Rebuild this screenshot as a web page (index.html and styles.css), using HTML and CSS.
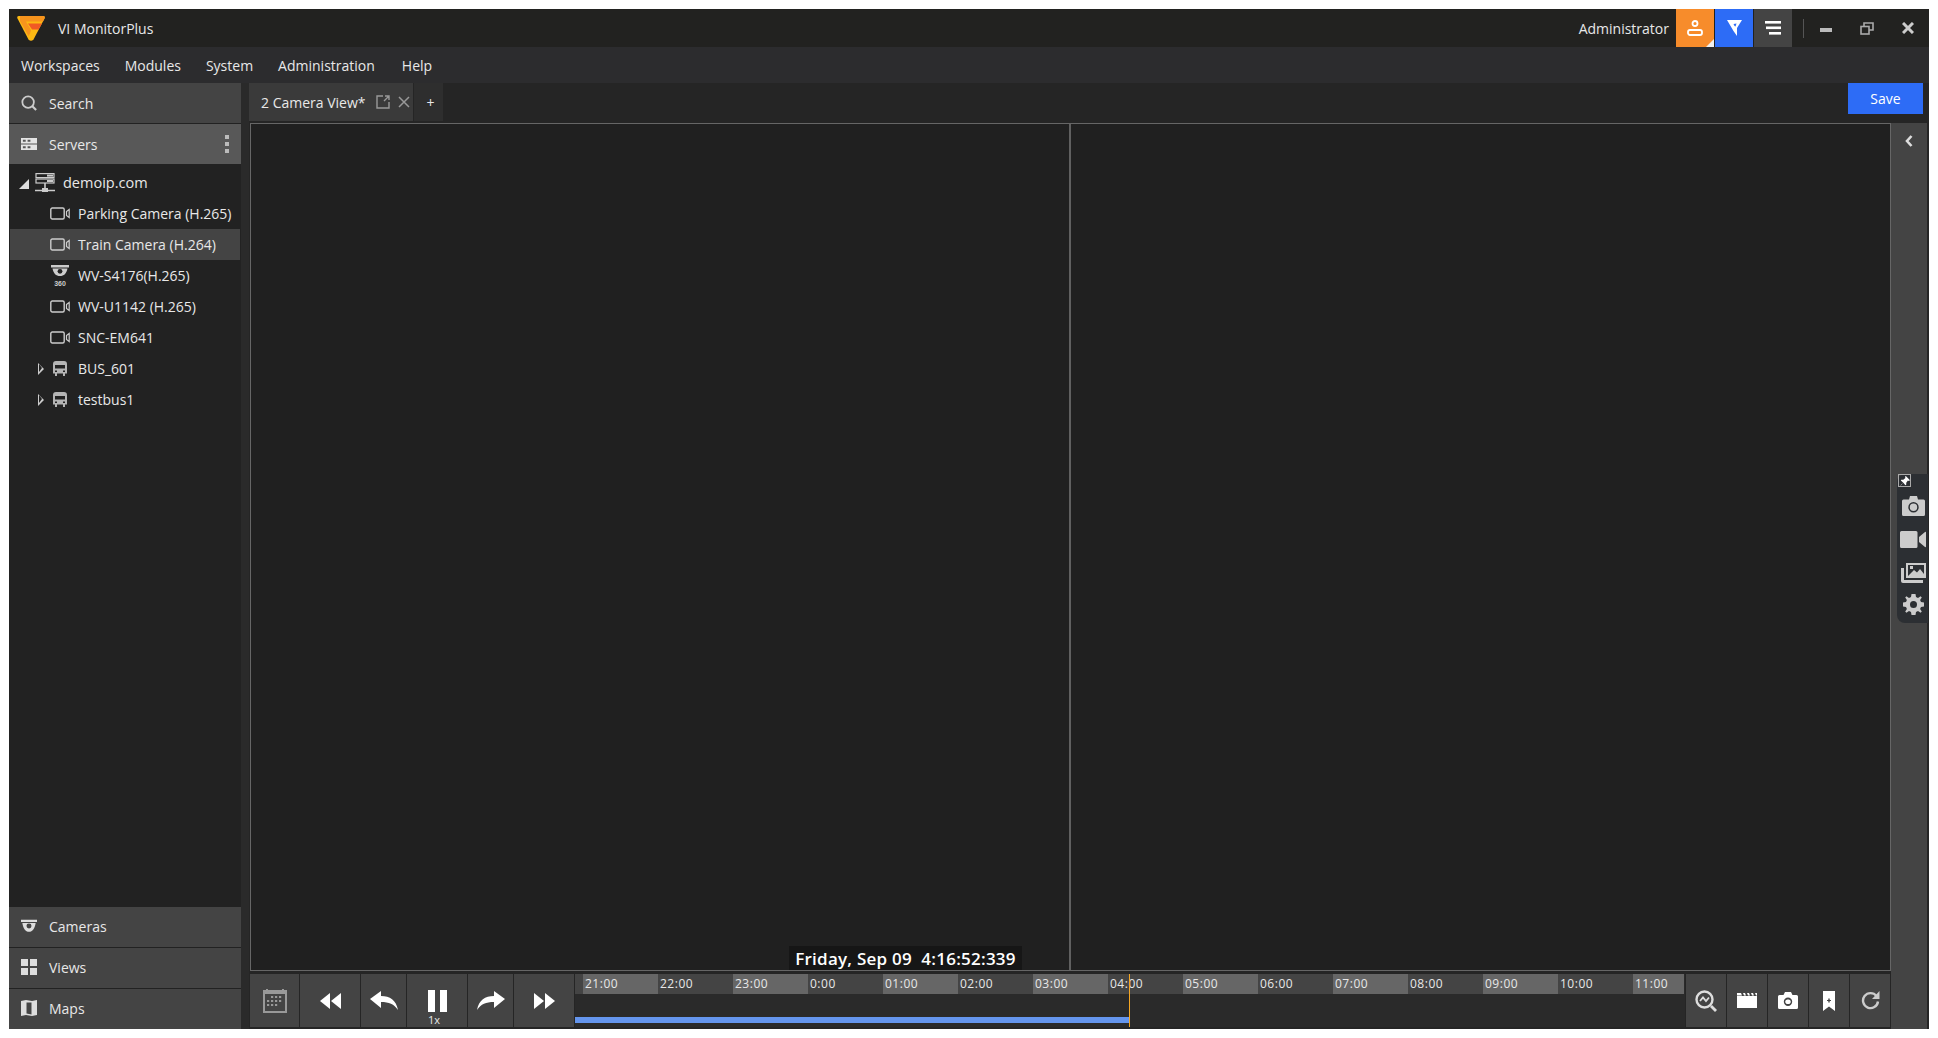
FILE: index.html
```html
<!DOCTYPE html>
<html lang="en">
<head>
<meta charset="utf-8">
<title>VI MonitorPlus</title>
<link rel="stylesheet" href="styles.css">
</head>
<body>
<div class="app">
  <header class="titlebar">
    <svg class="logo" viewBox="0 0 28 25"><path fill="#fdb913" d="M2 0H26Q28.5 0 27.5 2.5L16.5 23.5Q14 26 11.5 23.5L.5 2.5Q-.5 0 2 0Z"/><path fill="#f7941d" d="M3 0H26Q28.5 0 27.5 2.5L26 5.5H9L14.5 15 11.5 20 3 5Z"/><path fill="#f15a24" d="M11 7.5H25L21.5 13.5H15Z"/><path fill="#fdb913" d="M14 14H21L16 21 13 18.5Z"/></svg>
    <span class="app-name">VI MonitorPlus</span>
    <span class="user">Administrator</span>
    <button class="tb-btn orange"><svg viewBox="0 0 16 16" width="16" height="16" fill="none" stroke="#fff" stroke-width="1.8"><circle cx="8" cy="3.5" r="2.5"/><rect x="1" y="10" width="14" height="5" rx="2"/></svg><i class="corner"></i></button>
    <button class="tb-btn blue"><svg viewBox="0 0 15 16" width="15" height="16"><path fill="#fff" d="M0 0H15L10 8 10 16 6.5 11Z"/><path fill="#2d6cf6" d="M6.5 4 9.5 3.5 8.5 6.5 7.5 6Z"/></svg></button>
    <button class="tb-btn gray"><svg viewBox="0 0 16 14" width="16" height="14" fill="#fff"><rect y="0" width="16" height="2.6"/><rect x="1" y="5.5" width="15" height="2.6"/><rect x="4" y="11" width="12" height="2.6"/></svg></button>
    <span class="sep"></span>
    <span class="win-ctrl"><svg viewBox="0 0 12 12" width="12" height="12"><rect y="6" width="12" height="4" fill="#bbb"/></svg></span>
    <span class="win-ctrl"><svg viewBox="0 0 14 13" width="14" height="13" fill="none" stroke="#aaa" stroke-width="1.6"><rect x="1" y="4.5" width="8" height="7.5"/><path d="M4 4V1H13V8H9"/></svg></span>
    <span class="win-ctrl"><svg viewBox="0 0 12 12" width="12" height="12" stroke="#ccc" stroke-width="3"><path d="M1 1 11 11M11 1 1 11"/></svg></span>
  </header>
  <nav class="menubar">
    <a>Workspaces</a><a>Modules</a><a>System</a><a>Administration</a><a>Help</a>
  </nav>
  <div class="workspace">
    <aside class="sidebar">
      <div class="panel-btn">
        <svg class="panel-ico" viewBox="0 0 18 18" fill="none" stroke="#ccc" stroke-width="2"><circle cx="8" cy="8" r="6.5"/><path d="M12.5 12.5 17 17" stroke-width="2.4"/></svg>
        <span>Search</span>
      </div>
      <div class="panel-btn active">
        <svg class="panel-ico" viewBox="0 0 17 13" fill="#e4e4e4" fill-rule="evenodd"><path d="M0 0H17V6H0ZM2 2V4H5V2ZM7 2V4H10V2Z"/><path d="M0 7H17V13H0ZM2 9V11H5V9ZM7 9V11H10V9Z"/></svg>
        <span>Servers</span>
        <span class="kebab"><i></i><i></i><i></i></span>
      </div>
      <ul class="tree">
        <li class="root"><i class="tri-open"></i>
          <svg class="srv" viewBox="0 0 20 20" fill="none" stroke="#ccc" stroke-width="1.2"><rect x="1" y=".6" width="18" height="4"/><rect x="1" y="6" width="18" height="4"/><path d="M10 10V17M0 17.5H20" stroke-width="1.6"/><rect x="7" y="15" width="6" height="4" fill="#ccc" stroke="none"/><rect x="12" y="1.6" width="6" height="2" fill="#ccc" stroke="none"/><rect x="12" y="7" width="6" height="2" fill="#ccc" stroke="none"/></svg>
          <span>demoip.com</span></li>
        <li class="cam"><svg class="cam-ico" viewBox="0 0 20 13" fill="none" stroke="#ccc" stroke-width="1.4"><rect x=".8" y="1" width="13.4" height="11" rx="1.5"/><path d="M16.5 4.5 19.2 2.5V10.5L16.5 8.5Z" stroke-width="1.2"/></svg><span>Parking Camera (H.265)</span></li>
        <li class="cam selected"><svg class="cam-ico" viewBox="0 0 20 13" fill="none" stroke="#ccc" stroke-width="1.4"><rect x=".8" y="1" width="13.4" height="11" rx="1.5"/><path d="M16.5 4.5 19.2 2.5V10.5L16.5 8.5Z" stroke-width="1.2"/></svg><span>Train Camera (H.264)</span></li>
        <li class="cam"><svg class="dome360" viewBox="0 0 18 21"><path fill="#ccc" d="M0 0H18V2.5H0ZM1.5 3.5H16.5C15.5 8.5 13 11 9 11S2.5 8.5 1.5 3.5Z"/><circle cx="9" cy="6.3" r="2.4" fill="#222"/><text x="9" y="20.5" text-anchor="middle" class="t360">360</text></svg><span>WV-S4176(H.265)</span></li>
        <li class="cam"><svg class="cam-ico" viewBox="0 0 20 13" fill="none" stroke="#ccc" stroke-width="1.4"><rect x=".8" y="1" width="13.4" height="11" rx="1.5"/><path d="M16.5 4.5 19.2 2.5V10.5L16.5 8.5Z" stroke-width="1.2"/></svg><span>WV-U1142 (H.265)</span></li>
        <li class="cam"><svg class="cam-ico" viewBox="0 0 20 13" fill="none" stroke="#ccc" stroke-width="1.4"><rect x=".8" y="1" width="13.4" height="11" rx="1.5"/><path d="M16.5 4.5 19.2 2.5V10.5L16.5 8.5Z" stroke-width="1.2"/></svg><span>SNC-EM641</span></li>
        <li class="bus"><i class="tri-closed"></i><svg class="bus-ico" viewBox="0 0 14 15"><path fill="#b4b4b4" d="M3 0H11Q14 0 14 3V12.5H12V15H10V12.5H4V15H2V12.5H0V3Q0 0 3 0ZM2 4V7.5H12V4ZM2 9.5V11H4V9.5ZM10 9.5V11H12V9.5Z" fill-rule="evenodd"/></svg><span>BUS_601</span></li>
        <li class="bus"><i class="tri-closed"></i><svg class="bus-ico" viewBox="0 0 14 15"><path fill="#b4b4b4" d="M3 0H11Q14 0 14 3V12.5H12V15H10V12.5H4V15H2V12.5H0V3Q0 0 3 0ZM2 4V7.5H12V4ZM2 9.5V11H4V9.5ZM10 9.5V11H12V9.5Z" fill-rule="evenodd"/></svg><span>testbus1</span></li>
      </ul>
      <div class="panel-btn low">
        <svg class="panel-ico" viewBox="0 0 18 14"><path fill="#ddd" d="M0 0H18V2.5H0ZM1.5 3.5H16.5C15.5 10 13 13.5 9 13.5S2.5 10 1.5 3.5Z"/><circle cx="9" cy="7" r="2.8" fill="#444"/></svg>
        <span>Cameras</span>
      </div>
      <div class="panel-btn low">
        <svg class="panel-ico" viewBox="0 0 16 16" fill="#ddd"><rect width="7" height="7"/><rect x="9" width="7" height="7"/><rect y="9" width="7" height="7"/><rect x="9" y="9" width="7" height="7"/></svg>
        <span>Views</span>
      </div>
      <div class="panel-btn low">
        <svg class="panel-ico" viewBox="0 0 16 16" fill-rule="evenodd"><path fill="#ddd" d="M0 1 5 0 11 1 16 0V15L11 16 5 15 0 16ZM5.5 2.5V13.5L10.5 14.5V2.5Z"/></svg>
        <span>Maps</span>
      </div>
    </aside>
    <main class="main">
      <div class="tabbar">
        <div class="tab">
          <span>2 Camera View*</span>
          <svg viewBox="0 0 14 14" width="14" height="14" fill="none" stroke="#999" stroke-width="1.4"><path d="M7 1H1V13H13V7M8 6 13 1M9 1H13V5"/></svg>
          <svg viewBox="0 0 12 12" width="12" height="12" stroke="#999" stroke-width="1.5"><path d="M1 1 11 11M11 1 1 11"/></svg>
        </div>
        <div class="tab-add">+</div>
        <button class="save">Save</button>
      </div>
      <div class="content">
        <div class="stage">
          <div class="viewport">
            <div class="cell"></div>
            <div class="cell"></div>
            <div class="stamp">Friday, Sep 09&nbsp; 4:16:52:339</div>
          </div>
          <div class="controls">
            <button class="ctl w49"><svg viewBox="0 0 24 24" width="24" height="24"><path fill="#999" fill-rule="evenodd" d="M0 1H3V0H5V1H19V0H21V1H24V24H0ZM2 5V22H22V5Z"/><g fill="#999"><rect x="8" y="7" width="2.2" height="2"/><rect x="12" y="7" width="2.2" height="2"/><rect x="16" y="7" width="2.2" height="2"/><rect x="4" y="11" width="2.2" height="2"/><rect x="8" y="11" width="2.2" height="2"/><rect x="12" y="11" width="2.2" height="2"/><rect x="16" y="11" width="2.2" height="2"/><rect x="4" y="15" width="2.2" height="2"/><rect x="8" y="15" width="2.2" height="2"/><rect x="12" y="15" width="2.2" height="2"/></g></svg></button>
            <button class="ctl w60"><svg viewBox="0 0 21 16" width="21" height="16" fill="#fff"><path d="M10 0V16L0 8ZM21 0V16L11 8Z"/></svg></button>
            <button class="ctl w45"><svg viewBox="0 0 28 20" width="28" height="20" fill="#fff"><path d="M11 0V5C20 5 26 9 28 19 24 13 19 11 11 11V17L0 8Z"/></svg></button>
            <button class="ctl w60 pause"><svg viewBox="0 0 19 22" width="19" height="22" fill="#fff"><rect width="7" height="22"/><rect x="12" width="7" height="22"/></svg><small>1x</small></button>
            <button class="ctl w45"><svg viewBox="0 0 28 20" width="28" height="20" fill="#fff"><path d="M17 0V5C8 5 2 9 0 19 4 13 9 11 17 11V17L28 8Z"/></svg></button>
            <button class="ctl w60"><svg viewBox="0 0 21 16" width="21" height="16" fill="#fff"><path d="M0 0V16L10 8ZM11 0V16L21 8Z"/></svg></button>
            <div class="timeline">
              <div class="hours"><span class="lead"></span><span>21:00</span><span>22:00</span><span>23:00</span><span>0:00</span><span>01:00</span><span>02:00</span><span>03:00</span><span>04:00</span><span>05:00</span><span>06:00</span><span>07:00</span><span>08:00</span><span>09:00</span><span>10:00</span><span class="last">11:00</span></div>
              <div class="progress"></div>
              <i class="playhead"></i>
            </div>
            <button class="ctl w40"><svg viewBox="0 0 22 22" width="22" height="22" fill="none" stroke="#ddd" stroke-width="2.4"><circle cx="9.5" cy="9.5" r="8"/><path d="M16 16 21 21" stroke-width="2.8"/><path d="M5 11 8 7.5 11 11 14 7.5" stroke-width="1.8"/></svg></button>
            <button class="ctl w40"><svg viewBox="0 0 20 15" width="20" height="15"><path fill="#fff" d="M0 3H20V15H0ZM0 0H4L5 2.4H0ZM6 0H8L9 2.4H7ZM10 0H12L13 2.4H11ZM14 0H16L17 2.4H15ZM18 0H20V2.4H19Z"/></svg></button>
            <button class="ctl w40"><svg viewBox="0 0 20 17" width="20" height="17" fill-rule="evenodd"><path fill="#fff" d="M1.5 3H5.5L7 0H13L14.5 3H18.5Q20 3 20 4.5V15.5Q20 17 18.5 17H1.5Q0 17 0 15.5V4.5Q0 3 1.5 3ZM10 5.5A4.2 4.2 0 1 0 10 13.9 4.2 4.2 0 1 0 10 5.5ZM10 7.5A2.3 2.3 0 1 1 10 12 2.3 2.3 0 1 1 10 7.5Z"/></svg></button>
            <button class="ctl w40"><svg viewBox="0 0 12 20" width="12" height="20"><path fill="#fff" fill-rule="evenodd" d="M0 0H12V20L6 15.5 0 20ZM5.3 7.5V9H4V10H5.3V11.5H6.7V10H8V9H6.7V7.5Z"/></svg></button>
            <button class="ctl w40"><svg viewBox="0 0 19 19" width="19" height="19" fill="none" stroke="#ccc" stroke-width="2.4"><path d="M15.5 5A7.5 7.5 0 1 0 17 10.5"/><path fill="#ccc" stroke="none" d="M18.5 0V8H11Z"/></svg></button>
          </div>
        </div>
        <div class="rail">
          <button class="rail-toggle"><svg viewBox="0 0 8 12" width="8" height="12" fill="none" stroke="#ddd" stroke-width="2.6"><path d="M6.5 1 2 6 6.5 11"/></svg></button>
          <div class="tools">
            <span class="pin"><svg viewBox="0 0 12 12" width="10" height="10"><path fill="#fff" d="M7 0 12 5 10.5 6 9.5 5.5 7.5 8 7.5 10.5 6.5 11 4 8 1 11.5 .5 11 4 8 1 5.5 1.5 4.5 4 4.5 6.5 2.5 6 1Z"/></svg></span>
            <svg class="tool" viewBox="0 0 23 20" width="23" height="20" fill-rule="evenodd"><path fill="#ccc" d="M1.5 3.5H7L8 0H15L16 3.5H21.5Q23 3.5 23 5V18.5Q23 20 21.5 20H1.5Q0 20 0 18.5V5Q0 3.5 1.5 3.5ZM11.5 6A5.2 5.2 0 1 0 11.5 16.4 5.2 5.2 0 1 0 11.5 6ZM11.5 7.5A3.7 3.7 0 1 1 11.5 14.9 3.7 3.7 0 1 1 11.5 7.5Z"/></svg>
            <svg class="tool" viewBox="0 0 26 17" width="26" height="17"><path fill="#ccc" d="M1.5 0H16Q17.5 0 17.5 1.5V15.5Q17.5 17 16 17H1.5Q0 17 0 15.5V1.5Q0 0 1.5 0ZM19 6 25 1Q26 .5 26 1.5V15.5Q26 16.5 25 16L19 11Z"/></svg>
            <svg class="tool" viewBox="0 0 25 20" width="25" height="20" fill-rule="evenodd"><path fill="#ccc" d="M5 0H25V15H5ZM7 2V13H23V2Z"/><path fill="#ccc" d="M7 13 13 7 16 9.5 19 6 23 11V13ZM9 3H12V6H9Z"/><path fill="#ccc" d="M0 5H3V17H22V20H2Q0 20 0 18Z"/></svg>
            <svg class="tool" viewBox="0 0 21 21" width="21" height="21" fill-rule="evenodd"><path fill="#ccc" d="M8.5 0H12.5L13 3 15 3.9 17.6 2.2 18.8 3.4 17.1 6 18 8 21 8.5V12.5L18 13 17.1 15 18.8 17.6 17.6 18.8 15 17.1 13 18 12.5 21H8.5L8 18 6 17.1 3.4 18.8 2.2 17.6 3.9 15 3 13 0 12.5V8.5L3 8 3.9 6 2.2 3.4 3.4 2.2 6 3.9 8 3 ZM10.5 7A3.5 3.5 0 1 0 10.5 14 3.5 3.5 0 1 0 10.5 7Z"/></svg>
          </div>
        </div>
      </div>
    </main>
  </div>
</div>
</body>
</html>
```

FILE: styles.css
```css
* { box-sizing: border-box; }
html, body { margin: 0; height: 100%; }
body {
  background: #fff;
  padding: 9px;
  overflow: hidden;
  font-family: "Open Sans", "Noto Sans", sans-serif;
  font-size: 14px;
  color: #e8e8e8;
}
button { font: inherit; color: inherit; border: 0; padding: 0; margin: 0; }
.app { width: 1920px; height: 1020px; display: flex; flex-direction: column; background: #242424; }

.titlebar { height: 38px; flex: none; display: flex; align-items: center; background: #222220; padding-right: 1px; }
.logo { width: 28px; height: 25px; margin-left: 8px; }
.app-name { margin-left: 13px; }
.user { margin-left: auto; margin-right: 7px; }
.tb-btn { width: 38px; height: 38px; margin-right: 1px; display: flex; align-items: center; justify-content: center; position: relative; }
.orange { background: #f78c2b; }
.blue { background: #2d6cf6; }
.gray { background: #444; }
.corner { position: absolute; right: 0; bottom: 0; width: 0; height: 0; border-style: solid; border-width: 0 0 8px 8px; border-color: transparent transparent #f0f0f0 transparent; }
.sep { width: 1px; height: 19px; background: #555; margin: 0 5px 0 10px; }
.win-ctrl { width: 41px; display: flex; justify-content: center; }
.win-ctrl:nth-last-child(3) { margin-left: -4px; }

.menubar { height: 36px; flex: none; display: flex; align-items: center; gap: 25px; padding-left: 12px; background: #2c2c2e; }
.menubar a:last-child { margin-left: 2px; }

.workspace { flex: 1; min-height: 0; display: flex; }
.sidebar { width: 232px; flex: none; display: flex; flex-direction: column; background: #222; }
.panel-btn { height: 41px; flex: none; display: flex; align-items: center; background: #444; padding-left: 12px; border-bottom: 1px solid #222; }
.panel-btn.active { background: #585858; height: 40px; margin-bottom: 1px; border-bottom: 0; }
.panel-btn.low { border-top: 1px solid #222; border-bottom: 0; padding-bottom: 2px; }
.panel-ico { width: 16px; height: 16px; margin-right: 12px; flex: none; }
.kebab { margin-left: auto; margin-right: 12px; display: flex; flex-direction: column; gap: 3px; }
.kebab i { width: 4px; height: 4px; background: #bbb; display: block; }

.tree { list-style: none; margin: 0; padding: 2px 0 0; flex: 1; }
.tree li { height: 31px; display: flex; align-items: center; }
.tree li.root { padding-left: 10px; }
.tree li.root span { margin-left: 8px; font-size: 14.5px; }
.tree li.cam { padding-left: 41px; }
.tree li.cam span { margin-left: 8px; }
.tree li.selected { background: #444; margin: 0 1px; padding-left: 40px; }
.tree li.bus { padding-left: 29px; }
.tri-open { width: 0; height: 0; border-style: solid; border-width: 0 0 10px 10px; border-color: transparent transparent #ddd transparent; margin-top: 2px; }
.tri-closed { width: 0; height: 0; border-style: solid; border-width: 6.5px 0 6.5px 6px; border-color: transparent transparent transparent #ccc; position: relative; }
.tri-closed::after { content: ""; position: absolute; left: -5px; top: -4.5px; border-style: solid; border-width: 4.5px 0 4.5px 3.8px; border-color: transparent transparent transparent #222; }
.srv { width: 20px; height: 20px; margin-left: 6px; flex: none; }
.cam-ico { width: 20px; height: 13px; flex: none; }
.dome360 { width: 18px; height: 21px; margin: 0 1px; flex: none; }
.t360 { font-size: 7px; fill: #ccc; font-weight: 700; font-family: "Liberation Sans", sans-serif; }
.bus-ico { width: 14px; height: 15px; margin-left: 9px; margin-right: 11px; flex: none; }

.main { flex: 1; min-width: 0; display: flex; flex-direction: column; background: #252525; padding-left: 8px; box-shadow: inset 8px 0 0 #2a2a2a; }
.tabbar { height: 40px; flex: none; display: flex; align-items: flex-start; gap: 1px; padding-right: 6px; }
.tab { width: 164px; height: 38px; background: #3a3a3a; display: flex; align-items: center; padding-left: 12px; gap: 8px; }
.tab span { margin-right: 2px; }
.tab-add { width: 29px; height: 38px; background: #2e2e2e; display: flex; align-items: center; justify-content: center; padding-left: 4px; }
.save { margin-left: auto; width: 75px; height: 31px; background: #2d6cf6; color: #fff; }

.content { flex: 1; min-height: 0; display: flex; }
.stage { width: 1641px; margin-left: 1px; flex: none; display: flex; flex-direction: column; }
.viewport { height: 848px; flex: none; display: flex; position: relative; border: 1px solid #666; background: #202020; }
.cell { width: 818px; flex: none; }
.cell + .cell { flex: 1; border-left: 2px solid #606060; }
.stamp { position: absolute; left: 538px; bottom: 0; width: 233px; height: 24px; background: #161616; color: #fff; font-weight: 600; font-size: 17px; letter-spacing: .25px; display: flex; align-items: center; justify-content: center; white-space: nowrap; }

.controls { height: 53px; flex: none; margin-top: 3px; display: flex; gap: 1px; }
.ctl { height: 53px; flex: none; background: #444; display: flex; align-items: center; justify-content: center; position: relative; }
.w49 { width: 49px; }
.w60 { width: 60px; }
.w45 { width: 45px; }
.w40 { width: 40px; }
.pause small { position: absolute; left: 0; right: 6px; bottom: 0; text-align: center; font-size: 11px; line-height: 14px; }

.timeline { width: 1110px; flex: none; position: relative; background: #2a2a2a; }
.hours { height: 20px; display: flex; overflow: hidden; font-size: 12px; letter-spacing: .5px; line-height: 20px; }
.hours span { width: 75px; flex: none; padding-left: 2px; background: #444; }
.hours span:nth-child(even) { background: #666; }
.hours .lead { width: 8px; }
.hours .last { width: 51px; }
.progress { position: absolute; left: 0; width: 554px; top: 43px; height: 6px; background: #6495ed; }
.playhead { position: absolute; left: 554px; top: 0; bottom: 0; width: 1px; background: #f5a623; }

.rail { width: 36px; flex: none; background: #444; position: relative; display: flex; flex-direction: column; }
.rail-toggle { height: 36px; background: transparent; display: flex; align-items: center; justify-content: center; }
.tools { position: absolute; top: 351px; left: 6px; width: 31px; height: 149px; background: #2c2f33; border-radius: 8px 0 0 8px; }
.pin { position: absolute; left: 1px; top: 0; width: 13px; height: 13px; border: 1px solid #aaa; display: flex; align-items: center; justify-content: center; }
.tool { position: absolute; }
.tool:nth-child(2) { left: 5px; top: 22px; }
.tool:nth-child(3) { left: 3px; top: 57px; }
.tool:nth-child(4) { left: 4px; top: 89px; }
.tool:nth-child(5) { left: 6px; top: 120px; }
```
